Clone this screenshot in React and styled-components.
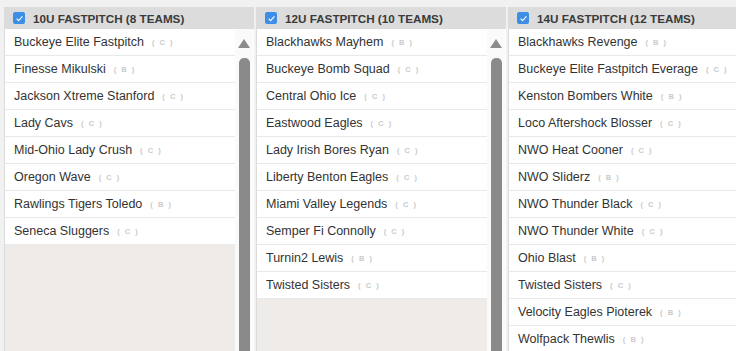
import styled, { createGlobalStyle } from "styled-components";

const GlobalStyle = createGlobalStyle`
  html, body {
    margin: 0;
    padding: 0;
    background: #f1f1f1;
    overflow: hidden;
  }
  body {
    font-family: "Liberation Sans", Arial, sans-serif;
    color: #333;
  }
`;

const divisions = [
  {
    name: "10U FASTPITCH (8 TEAMS)",
    teams: [
      ["Buckeye Elite Fastpitch", "C"],
      ["Finesse Mikulski", "B"],
      ["Jackson Xtreme Stanford", "C"],
      ["Lady Cavs", "C"],
      ["Mid-Ohio Lady Crush", "C"],
      ["Oregon Wave", "C"],
      ["Rawlings Tigers Toledo", "B"],
      ["Seneca Sluggers", "C"],
    ],
  },
  {
    name: "12U FASTPITCH (10 TEAMS)",
    teams: [
      ["Blackhawks Mayhem", "B"],
      ["Buckeye Bomb Squad", "C"],
      ["Central Ohio Ice", "C"],
      ["Eastwood Eagles", "C"],
      ["Lady Irish Bores Ryan", "C"],
      ["Liberty Benton Eagles", "C"],
      ["Miami Valley Legends", "C"],
      ["Semper Fi Connolly", "C"],
      ["Turnin2 Lewis", "B"],
      ["Twisted Sisters", "C"],
    ],
  },
  {
    name: "14U FASTPITCH (12 TEAMS)",
    teams: [
      ["Blackhawks Revenge", "B"],
      ["Buckeye Elite Fastpitch Everage", "C"],
      ["Kenston Bombers White", "B"],
      ["Loco Aftershock Blosser", "C"],
      ["NWO Heat Cooner", "C"],
      ["NWO Sliderz", "B"],
      ["NWO Thunder Black", "C"],
      ["NWO Thunder White", "C"],
      ["Ohio Blast", "B"],
      ["Twisted Sisters", "C"],
      ["Velocity Eagles Pioterek", "B"],
      ["Wolfpack Thewlis", "B"],
    ],
  },
];

const Board = styled.div`
  display: flex;
  gap: 2px;
  padding: 7px 0 0 4px;
  height: 344px;
  width: 800px;
`;

const Column = styled.section`
  flex: 0 0 249px;
  display: flex;
  flex-direction: column;
  border-left: 1px solid #dcdcdc;
  background: #fff;
  overflow: hidden;
`;

const Header = styled.header`
  flex-shrink: 0;
  display: flex;
  align-items: center;
  gap: 8px;
  height: 22px;
  padding-left: 8px;
  background: #dcdcdc;
  font-size: 11.7px;
  font-weight: bold;
  color: #3a3a3a;
  white-space: nowrap;
`;

const Check = styled.span`
  width: 12px;
  height: 12px;
  border-radius: 2px;
  background: #3d8ee6;
  display: flex;
  align-items: center;
  justify-content: center;
`;

const Body = styled.div`
  flex: 1;
  min-height: 0;
  display: flex;
`;

const List = styled.ul`
  list-style: none;
  margin: 0;
  padding: 0;
  width: 230px;
  flex-shrink: 0;
  background: #eeebe8;
`;

const Row = styled.li`
  height: 26px;
  display: flex;
  align-items: center;
  padding-left: 9px;
  background: #fff;
  border-bottom: 1px solid #e9e9e9;
  font-size: 12.5px;
  color: #333;
  white-space: nowrap;
`;

const Tag = styled.span`
  margin-left: 8px;
  font-size: 7.5px;
  letter-spacing: 1.5px;
  color: #cacaca;
  font-weight: bold;
`;

const Scroll = styled.div`
  width: 18px;
  flex-shrink: 0;
  background: #fafafa;
  display: flex;
  flex-direction: column;
  align-items: center;
  padding-top: 10px;
`;

const Arrow = styled.div`
  width: 0;
  height: 0;
  border-left: 6px solid transparent;
  border-right: 6px solid transparent;
  border-bottom: 9px solid #8c8c8c;
`;

const Thumb = styled.div`
  margin-top: 10px;
  width: 11px;
  flex: 1;
  background: #8a8a8a;
  border-radius: 5px 5px 0 0;
`;

const CheckMark = () => (
  <svg width="9" height="9" viewBox="0 0 10 10">
    <path d="M1.8 5.2 L4 7.3 L8.3 2.6" fill="none" stroke="#fff" strokeWidth="1.3" />
  </svg>
);

export default function App() {
  return (
    <>
      <GlobalStyle />
      <Board>
        {divisions.map((d) => (
          <Column key={d.name}>
            <Header>
              <Check>
                <CheckMark />
              </Check>
              {d.name}
            </Header>
            <Body>
              <List>
                {d.teams.map(([team, level]) => (
                  <Row key={team}>
                    {team}
                    <Tag>( {level} )</Tag>
                  </Row>
                ))}
              </List>
              <Scroll>
                <Arrow />
                <Thumb />
              </Scroll>
            </Body>
          </Column>
        ))}
      </Board>
    </>
  );
}
